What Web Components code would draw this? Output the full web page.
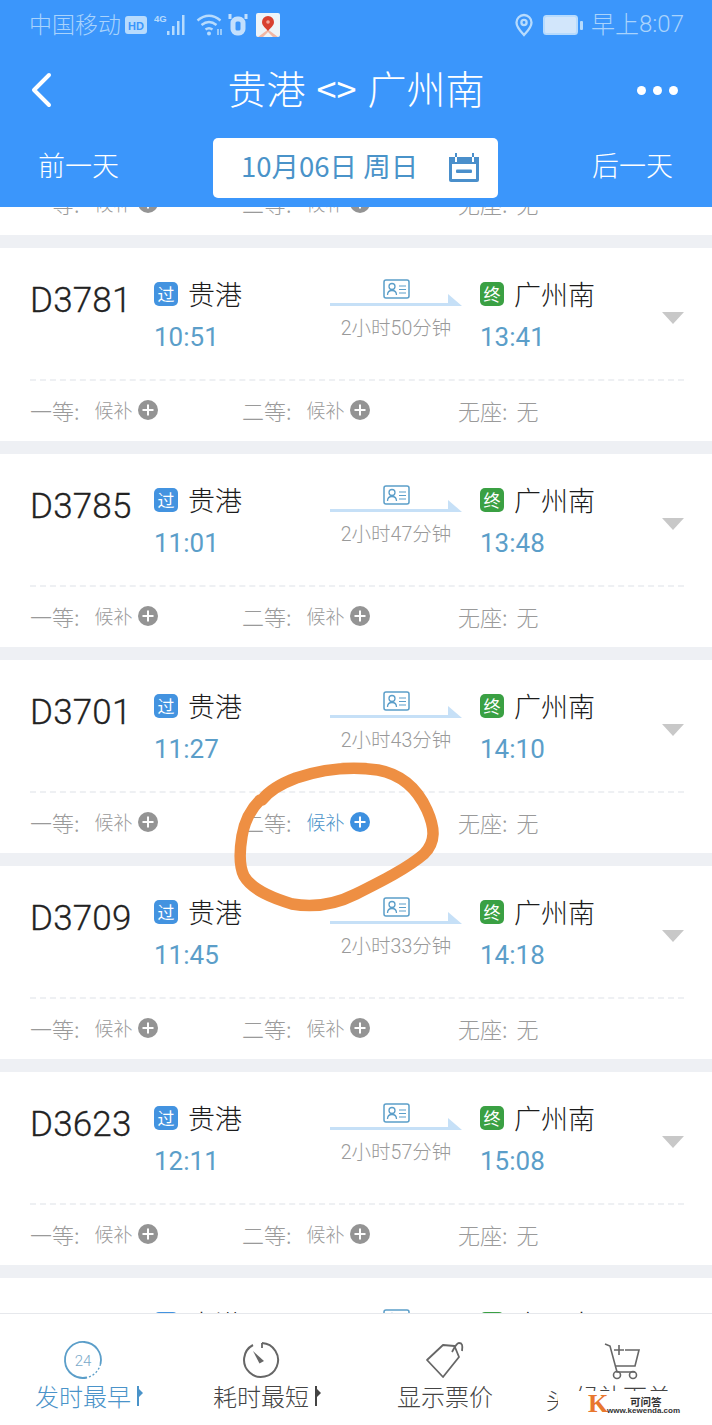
<!DOCTYPE html>
<html lang="zh"><head><meta charset="utf-8">
<style>
html,body{margin:0;padding:0;background:#fff}
body{font-family:"Noto Sans CJK SC","Noto Sans",sans-serif}
</style></head><body>
<train-app></train-app>
<script>
const FONT='"Noto Sans CJK SC","Noto Sans",sans-serif';
const NUM='Roboto,"Noto Sans CJK SC",sans-serif';
class StatusBar extends HTMLElement{connectedCallback(){this.attachShadow({mode:'open'}).innerHTML=`<style>
:host{display:flex;align-items:center;height:50px;padding:0 28px 0 29px;color:#a9d3fc;font:300 23px ${NUM};box-sizing:border-box}
.cn{font-family:${FONT};font-weight:300;line-height:30px;margin-bottom:5px}
.num{line-height:30px;margin-bottom:3px;font-size:24px}
.l,.r{display:flex;align-items:center}.l{flex:1}
svg{display:block;flex:none}
</style>
<div class="l"><span class="cn">中国移动</span>
<svg width="22" height="18" style="margin-left:4px" viewBox="0 0 22 18"><rect width="22" height="18" rx="3" fill="#b7dbfd"/><text x="11" y="13.5" text-anchor="middle" font-family="Liberation Sans" font-weight="700" font-size="11" fill="#3b96fb">HD</text></svg>
<svg width="36" height="24" style="margin-left:7px" viewBox="0 0 36 24"><text x="0" y="9" font-family="Liberation Sans" font-weight="700" font-size="9.5" fill="#b7dbfd">4G</text><g fill="#b7dbfd"><rect x="13" y="18" width="2.500" height="4"/><rect x="18" y="13" width="2.500" height="9"/><rect x="23" y="8" width="2.500" height="14"/><rect x="28" y="2" width="2.500" height="20"/></g></svg>
<svg width="28" height="24" style="margin-left:6px" viewBox="0 0 28 24" fill="none" stroke="#b7dbfd" stroke-width="2.400"><path d="M1.500 7.500Q13-2 24.500 7.500"/><path d="M5.500 12Q13 6 20.500 12"/><path d="M9.500 16.500Q13 14 16.500 16.500"/><circle cx="13" cy="20.500" r="2" fill="#b7dbfd" stroke="none"/><path d="M22 16v6M25 16v6" stroke-width="1.500"/></svg>
<svg width="20" height="22" style="margin-left:4px" viewBox="0 0 20 22" fill="none" stroke="#c3e0fd" stroke-width="5"><rect x="5" y="5" width="10" height="14" rx="4"/><path d="M2 0v5M18 0v5" stroke-width="3"/></svg>
<svg width="24" height="24" style="margin-left:8px" viewBox="0 0 24 24"><rect width="24" height="24" rx="2" fill="#eef4f8"/><path d="M12 16.500L2 24h5l5-5 5 5h5Z" fill="#f0b7a6"/><path d="M12 3a6 6 0 0 1 6 6C18 13 14 15 12 18 10 15 6 13 6 9A6 6 0 0 1 12 3Z" fill="#d8402f"/><circle cx="12" cy="9" r="1.800" fill="#f3a79b"/></svg></div>
<div class="r">
<svg width="20" height="24" viewBox="0 0 20 24" fill="none" stroke="#b7dbfd" stroke-width="2.300"><path d="M10 2a7.500 7.500 0 0 1 7.500 7.500C17.500 14.500 13 18.500 10 22 7 18.500 2.500 14.500 2.500 9.500A7.500 7.500 0 0 1 10 2Z"/><circle cx="10" cy="9.500" r="2.600"/></svg>
<svg width="40" height="20" style="margin-left:9px" viewBox="0 0 40 20"><rect x="1" y="1" width="33" height="18" rx="2.500" fill="#d2e6fb" stroke="#b7dbfd" stroke-width="2"/><rect x="37" y="6" width="3" height="9" rx="1" fill="#b7dbfd"/></svg>
<span class="cn" style="margin-left:8px;font-size:24px">早上</span><span class="num">8:07</span></div>`}}
class TopBar extends HTMLElement{connectedCallback(){this.attachShadow({mode:'open'}).innerHTML=`<style>
:host{display:block;background:#3b96fb;height:207px;box-sizing:border-box;color:#fff;font-family:${FONT};flex:none}
.title{display:flex;align-items:center;justify-content:space-between;height:80px;padding:0 34px 0 30px}
h1{margin:0 0 6px 23px;font:300 39px/50px ${FONT};display:flex;align-items:center;gap:11px;white-space:nowrap}
h1 b{font:400 36px/50px ${FONT}}
.dots{display:flex;gap:7px}.dots i{width:9px;height:9px;border-radius:50%;background:#fff;display:block}
.date{display:flex;align-items:center;justify-content:space-between;padding:0 39px 0 38px;height:60px;margin-top:8px;font-size:27px;font-weight:300}
.date>span,.pick>span{line-height:36px;margin-bottom:7px}
.pick{width:285px;height:60px;background:#fff;border-radius:5px;color:#4a93c9;display:flex;align-items:center;box-sizing:border-box;padding:0 19px 0 28px;justify-content:space-between;font-size:27.500px;font-weight:400}
.pick span{white-space:nowrap}
</style>
<status-bar></status-bar>
<div class="title"><svg width="22" height="36" viewBox="0 0 22 36" fill="none" stroke="#fff" stroke-width="4" stroke-linecap="round" stroke-linejoin="round"><path d="M19 3L4 18 19 33"/></svg>
<h1><span>贵港</span><b>&lt;&gt;</b><span>广州南</span></h1>
<div class="dots"><i></i><i></i><i></i></div></div>
<div class="date"><span>前一天</span><div class="pick"><span>10月06日 周日</span>
<svg width="30" height="30" viewBox="0 0 30 30"><path d="M0 4h30v23a2 2 0 0 1-2 2H2a2 2 0 0 1-2-2Z" fill="#4a8fcb"/><rect x="3" y="11" width="24" height="15" fill="#fff"/><rect x="7" y="16.500" width="16" height="3.500" rx="1" fill="#4a8fcb"/><path d="M7 0v4M24 0v4" stroke="#4a8fcb" stroke-width="2"/><path d="M7 4v5M24 4v5" stroke="#fff" stroke-width="2"/></svg></div><span>后一天</span></div>`}}
class SeatItem extends HTMLElement{connectedCallback(){
const act=this.hasAttribute('active');const v=this.getAttribute('value');
this.attachShadow({mode:'open'}).innerHTML=`<style>
:host{display:flex;align-items:center;color:#9a9a9a;font:300 22px/30px ${FONT};white-space:nowrap;height:30px}
.v{font-size:19px;margin-left:15px;color:${act?'#4a93c9':'#9a9a9a'}}
.p{margin-left:5px;width:20px;height:20px;display:block}
.n{font-size:22px;margin-left:9px}
</style><span><slot></slot></span>${v?`<span class="v">${v}</span><svg class="p" viewBox="0 0 20 20"><circle cx="10" cy="10" r="10" fill="${act?'#3d90e0':'#949494'}"/><path d="M4.500 10h11M10 4.500v11" stroke="#fff" stroke-width="2"/></svg>`:`<span class="n">无</span>`}`}}
class TrainCard extends HTMLElement{connectedCallback(){
const a=k=>this.getAttribute(k);
const tail=this.hasAttribute('tail'),peek=this.hasAttribute('peek');
const seats=`<div class="seats"><seat-item value="候补">一等:</seat-item><seat-item value="候补" ${this.hasAttribute('active')?'active':''}>二等:</seat-item><seat-item>无座:</seat-item></div>`;
const top=`<div class="top"><div class="no">${a('no')||''}</div>
<div class="st"><div class="name"><span class="tag" style="background:#4393e0">过</span>贵港</div>${peek?'':`<div class="t">${a('dep')}</div>`}</div>
<div class="mid"><svg width="132" height="34" viewBox="0 0 132 34"><rect x="54" y="1" width="25" height="18" rx="2" fill="#fff" stroke="#5b9ec9" stroke-width="1.500"/><circle cx="62" cy="7.500" r="3" fill="none" stroke="#5b9ec9" stroke-width="1.300"/><path d="M57.500 16c0-6 9-6 9 0" fill="none" stroke="#5b9ec9" stroke-width="1.300"/><path d="M69 7h7M69 10.500h7M69 14h7" stroke="#5b9ec9" stroke-width="1.200"/><path d="M0 24h118V15l14 12H0Z" fill="#c6e0f7"/></svg>${peek?'':`<div class="dur">${a('dur')}</div>`}</div>
<div class="st to"><div class="name"><span class="tag" style="background:#3aa043">终</span>广州南</div>${peek?'':`<div class="t">${a('arr')}</div>`}</div></div>`;
this.attachShadow({mode:'open'}).innerHTML=`<style>
:host{display:block;background:#fff;height:193px;margin-bottom:13px;box-sizing:border-box;padding:0 28px 0 30px;position:relative;overflow:hidden}
:host([tail]){height:28px}
:host([tail]) .seats{margin-top:-19px;padding-top:0}
.top{display:flex;height:131px;border-bottom:2px dashed #eef0f3;box-sizing:content-box}
.no{width:124px;flex:none;font:300 35px/1 ${NUM};color:#222;padding-top:35px;letter-spacing:.2px;box-sizing:border-box;-webkit-text-stroke:.3px #222}
.st{width:176px;flex:none;padding-top:27px;box-sizing:border-box}
.st.to{width:182px;margin-left:18px}
.name{display:flex;align-items:center;font:300 27px/38px ${FONT};color:#1c1c1c;gap:10px}
.t{font:400 26px/30px ${NUM};color:#5b9ec9;margin-top:9px}
.tag{width:24px;height:24px;border-radius:5px;color:#fff;font:400 17px/24px ${FONT};text-align:center;flex:none}
.mid{width:132px;flex:none;display:flex;flex-direction:column;align-items:center;padding-top:31px;box-sizing:border-box}
.mid svg{display:block}
.dur{font:300 19.500px/24px Roboto,"Noto Sans CJK SC",sans-serif;color:#9a9a9a;margin-top:4px;white-space:nowrap}
.caret{position:absolute;right:28px;top:64px;width:0;height:0;border:11px solid transparent;border-top:12px solid #c8c8c8;border-bottom:0}
.seats{display:grid;grid-template-columns:212px 216px 1fr;padding-top:14px}
</style>${tail?seats:top+(peek?'':'<div class="caret"></div>'+seats)}`}}
class TabItem extends HTMLElement{connectedCallback(){
const c=this.getAttribute('color')||'#444';
this.attachShadow({mode:'open'}).innerHTML=`<style>
:host{display:flex;flex-direction:column;align-items:center;color:${c};font:300 24px/32px ${FONT};white-space:nowrap}
.lb{margin-top:0;position:relative}
i{position:absolute;left:100%;margin-left:6px;top:6px;width:2px;height:20px;background:${c}}
i::after{content:"";position:absolute;left:2px;top:3px;border-left:4px solid ${c};border-top:4px solid transparent;border-bottom:4px solid transparent}
</style><slot name="icon"></slot><div class="lb"><slot></slot>${this.hasAttribute('mark')?'<i></i>':''}</div>`}}
class TabBar extends HTMLElement{connectedCallback(){this.attachShadow({mode:'open'}).innerHTML=`<style>
:host{display:grid;grid-template-columns:166px 190px 178px 178px;padding-top:26px;height:112px;box-sizing:border-box;background:#fff;border-top:1px solid #e6e8ec;flex:none;position:relative}
svg{display:block;height:40px;overflow:visible}
</style>
<tab-item color="#4a93c9" mark><svg slot="icon" width="40" height="40" viewBox="0 0 40 40" fill="none"><path d="M24 37.500A18 18 0 1 1 37.500 24" stroke="#5b9ec9" stroke-width="1.800"/><path d="M37.500 24A18 18 0 0 1 24 37.500" stroke="#5b9ec9" stroke-width="1.300" stroke-dasharray="2 2"/><text x="20" y="26" text-anchor="middle" font-family="Roboto" font-size="15" fill="#7aa9c9" stroke="none">24</text></svg>发时最早</tab-item>
<tab-item mark><svg slot="icon" width="40" height="40" viewBox="0 0 40 40" fill="none"><path d="M12 5A17 17 0 1 0 21 3" stroke="#666" stroke-width="2"/><path d="M21 3v5" stroke="#666" stroke-width="1.800"/><path d="M12 11L18.500 23.500 23 21Z" fill="#666"/></svg>耗时最短</tab-item>
<tab-item><svg slot="icon" width="40" height="40" viewBox="0 0 40 40" fill="none" stroke="#666" stroke-width="1.800"><path d="M18 5L2 20 18 37 34 17 29.500 6Z" stroke-linejoin="round"/><path d="M27 12c2-3 4-9 7-9 3 0 4 2 3 8"/></svg>显示票价</tab-item>
<tab-item><svg slot="icon" width="40" height="40" viewBox="0 0 40 40" fill="none" stroke="#666" stroke-width="1.600"><path d="M2 4l5 2 7 26h18"/><path d="M22 10h14l-4 16H13"/><path d="M11 10h10M16 5v10"/><circle cx="14" cy="35" r="3.500"/><circle cx="30" cy="35" r="3.500"/></svg>候补下单</tab-item>
<water-mark></water-mark>`}}
class WaterMark extends HTMLElement{connectedCallback(){this.attachShadow({mode:'open'}).innerHTML=`<style>
:host{display:block;position:absolute;left:560px;top:77px;width:152px;height:35px;background:#fff}
.h{position:absolute;left:-14px;top:-4px;width:12px;height:24px;overflow:hidden;font:300 23px/24px ${FONT};color:#444}
.k{position:absolute;left:28px;top:-1px;font:700 26px/28px "Liberation Serif",serif;color:#e8772e}
.a{position:absolute;left:70px;top:4px;font:700 10.500px/13px ${FONT};color:#333;white-space:nowrap}
.b{position:absolute;left:47px;top:15px;font:700 8px/10px "Liberation Sans",sans-serif;color:#333;white-space:nowrap}
</style><span class="h">头</span><span class="k">K</span><span class="a">可问答</span><span class="b">www.kewenda.com</span>`}}
class TrainApp extends HTMLElement{connectedCallback(){
const rows=[['D3781','10:51','13:41','2小时50分钟'],['D3785','11:01','13:48','2小时47分钟'],['D3701','11:27','14:10','2小时43分钟',1],['D3709','11:45','14:18','2小时33分钟'],['D3623','12:11','15:08','2小时57分钟']];
this.attachShadow({mode:'open'}).innerHTML=`<style>
:host{display:flex;flex-direction:column;width:712px;height:1425px;overflow:hidden;position:relative;background:#eef0f4}
.list{flex:1;min-height:0;overflow:hidden;position:relative}
.ring{position:absolute;left:230px;top:758px;pointer-events:none}
</style><top-bar></top-bar>
<div class="list"><train-card tail></train-card>
${rows.map(r=>`<train-card no="${r[0]}" dep="${r[1]}" arr="${r[2]}" dur="${r[3]}" ${r[4]?'active':''}></train-card>`).join('')}<train-card peek></train-card></div>
<tab-bar></tab-bar>
<svg class="ring" width="214" height="160" viewBox="0 0 214 160" fill="none"><path d="M30 42C22 50 15 60 12 78 9 96 10 110 14 118 22 132 42 140 62 146 84 150 106 146 126 136 150 124 178 110 194 96 206 84 205 70 197 52 187 30 170 16 148 12 120 8 90 12 66 20 50 26 38 34 32 42" stroke="#ee8f43" stroke-width="11.500" stroke-linecap="round" stroke-linejoin="round"/></svg>`}}
[['status-bar',StatusBar],['top-bar',TopBar],['seat-item',SeatItem],['train-card',TrainCard],['tab-item',TabItem],['water-mark',WaterMark],['tab-bar',TabBar],['train-app',TrainApp]].forEach(([n,c])=>customElements.define(n,c));
</script></body></html>
